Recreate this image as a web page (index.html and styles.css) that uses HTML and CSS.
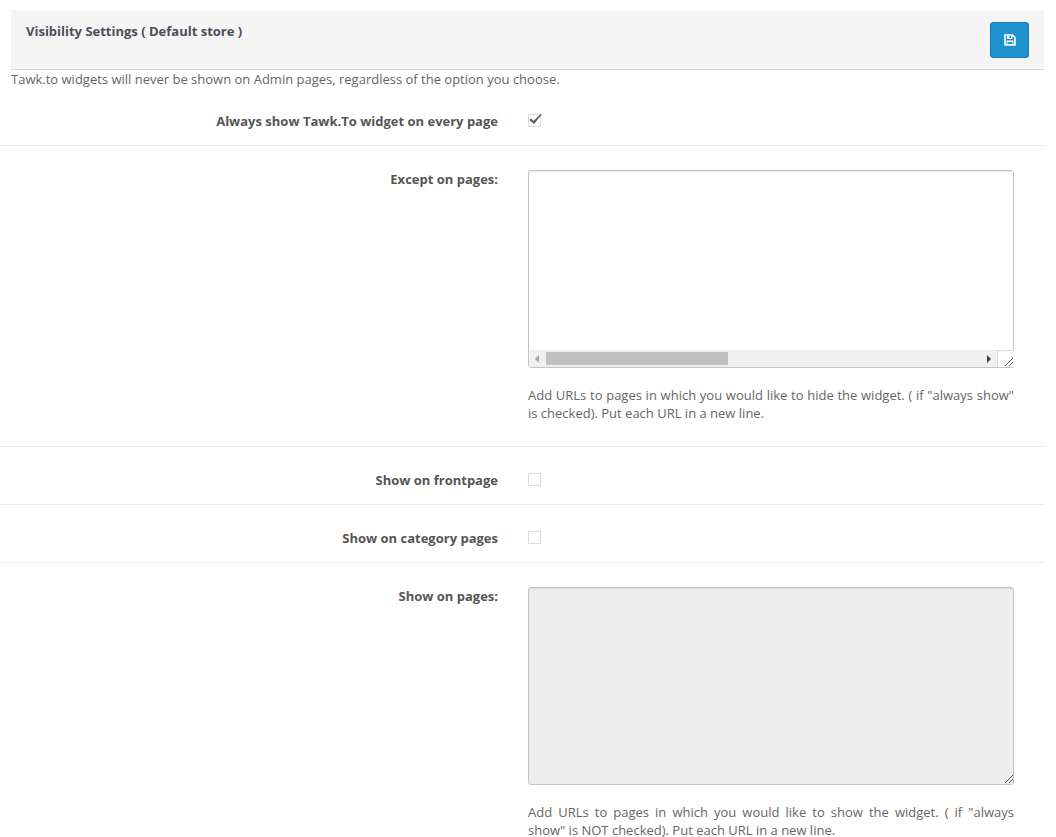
FILE: index.html
```html
<!DOCTYPE html>
<html lang="en">
<head>
    <meta charset="UTF-8">
    <meta name="viewport" content="width=device-width, initial-scale=1.0">
    <title>Visibility Settings</title>
    <link rel="stylesheet" href="styles.css">
</head>
<body>
    <form class="settings">
        <div class="page-header">
            <h1>Visibility Settings ( Default store )</h1>
            <button type="submit" class="save-button" aria-label="Save">
                <svg width="12" height="12" viewBox="0 0 12 12">
                    <path d="M1 1h7.500L11 3.500V11H1z" fill="none" stroke="#fff" stroke-width="1.600"/>
                    <path d="M3 1h5.500v4H3zM2.500 6.500h7V11h-7z" fill="#fff"/>
                    <path d="M5.500 1.500h1.500v2.500H5.500zM3.500 8h5v2h-5z" fill="#1e91cf"/>
                </svg>
            </button>
        </div>
        <p class="intro">Tawk.to widgets will never be shown on Admin pages, regardless of the option you choose.</p>

        <div class="form-group">
            <label for="always-display">Always show Tawk.To widget on every page</label>
            <div class="field">
                <input type="checkbox" id="always-display" class="checkbox" checked>
                <svg class="tick" width="15" height="15" viewBox="0 0 15 15">
                    <path d="M1.500 7l1.500-1.500L5.500 8 12.500 1 14 1 6 11z" fill="#555"/>
                </svg>
            </div>
        </div>

        <div class="form-group">
            <label for="hide-custom">Except on pages:</label>
            <div class="field">
                <div class="textarea-wrap">
                    <textarea id="hide-custom" wrap="off"></textarea>
                    <div class="scrollbar">
                        <svg width="17" height="17" viewBox="0 0 17 17" fill="#a3a3a3"><path d="M10 5v8L6 9z"/></svg>
                        <div class="track"><div class="thumb"></div></div>
                        <svg width="17" height="17" viewBox="0 0 17 17" fill="#404040"><path d="M7 5v8l4-4z"/></svg>
                        <div class="corner"></div>
                    </div>
                    <svg class="grip" width="10" height="10" viewBox="0 0 10 10" stroke="#555"><path d="M1 9l8-8M5 9l4-4"/></svg>
                </div>
                <p class="help">Add URLs to pages in which you would like to hide the widget. ( if "always show" is checked). Put each URL in a new line.</p>
            </div>
        </div>

        <div class="form-group">
            <label for="show-frontpage">Show on frontpage</label>
            <div class="field">
                <input type="checkbox" id="show-frontpage" class="checkbox">
            </div>
        </div>

        <div class="form-group">
            <label for="show-category">Show on category pages</label>
            <div class="field">
                <input type="checkbox" id="show-category" class="checkbox">
            </div>
        </div>

        <div class="form-group">
            <label for="show-custom">Show on pages:</label>
            <div class="field">
                <div class="textarea-wrap">
                    <textarea id="show-custom" disabled></textarea>
                    <svg class="grip" width="10" height="10" viewBox="0 0 10 10" stroke="#555"><path d="M1 9l8-8M5 9l4-4"/></svg>
                </div>
                <p class="help">Add URLs to pages in which you would like to show the widget. ( if "always show" is NOT checked). Put each URL in a new line.</p>
            </div>
        </div>
    </form>

    <script>
    const always = document.getElementById('always-display');
    always.addEventListener('change', () => {
        document.getElementById('hide-custom').disabled = !always.checked;
        document.getElementById('show-custom').disabled = always.checked;
    });
    </script>
</body>
</html>
```
FILE: styles.css
```css
* {
    box-sizing: border-box;
}

body {
    margin: 0;
    padding: 10px 12px 0 0;
    background-color: #fff;
    color: #666;
    font-family: "Open Sans", sans-serif;
    font-size: 13px;
    line-height: 18px;
    overflow-x: hidden;
}

.page-header {
    display: flex;
    justify-content: space-between;
    align-items: flex-start;
    margin-left: 11px;
    padding: 12px 15px 11px;
    background-color: #f5f5f5;
    border-bottom: 1px solid #dcdcdc;
}

.page-header h1 {
    margin: 0;
    color: #4c4d5a;
    font-size: 13px;
    font-weight: 700;
}

.save-button {
    display: flex;
    justify-content: center;
    align-items: center;
    width: 39px;
    height: 36px;
    padding: 0;
    background-color: #1e91cf;
    border: 1px solid #1978ab;
    border-radius: 3px;
    color: #fff;
    cursor: pointer;
}

.save-button:hover {
    background-color: #1872a2;
}

.intro {
    margin: 0 0 0 11px;
}

.form-group {
    display: grid;
    grid-template-columns: 1fr 1fr;
    column-gap: 30px;
    padding: 24px 30px 15px 12px;
}

.form-group + .form-group {
    border-top: 1px solid #ededed;
}

.form-group label {
    color: #555;
    font-weight: 700;
    text-align: right;
}

.field {
    position: relative;
}

.checkbox {
    display: block;
    appearance: none;
    width: 13px;
    height: 13px;
    margin: 2px 0 0;
    background-color: #fff;
    border: 1px solid #dcdcdc;
}

.tick {
    display: none;
    position: absolute;
    top: 1px;
    left: 0;
    pointer-events: none;
}

.checkbox:checked + .tick {
    display: block;
}

.textarea-wrap {
    position: relative;
}

textarea {
    display: block;
    width: 100%;
    height: 198px;
    padding: 8px 13px;
    background-color: #fff;
    border: 1px solid #c4c4c4;
    border-radius: 3px;
    box-shadow: inset 0 1px 1px rgba(0, 0, 0, 0.08);
    color: #555;
    font: inherit;
    resize: none;
}

textarea:disabled {
    background-color: #ededed;
}

/* horizontal bar along the bottom of the text box */
.scrollbar {
    position: absolute;
    left: 1px;
    right: 0;
    bottom: 1px;
    display: flex;
    height: 17px;
    background-color: #f0f0f0;
}

.track {
    flex: 1;
    padding: 2px 0;
}

.thumb {
    width: 42%;
    height: 13px;
    background-color: #c1c1c1;
}

.corner {
    width: 17px;
    background-color: #fff;
    border-top: 1px solid #dcdcdc;
    border-left: 1px solid #dcdcdc;
}

.grip {
    position: absolute;
    right: 0;
    bottom: 1px;
    pointer-events: none;
}

.help {
    margin: 18px 0 9px;
    text-align: justify;
}
```
